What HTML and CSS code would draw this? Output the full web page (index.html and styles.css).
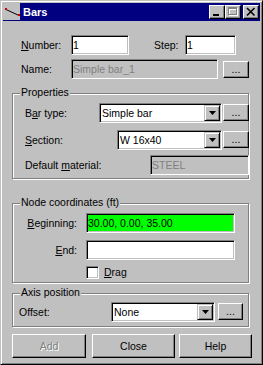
FILE: index.html
```html
<!DOCTYPE html>
<html lang="en">
<head>
    <meta charset="UTF-8">
    <title>Bars</title>
    <link rel="stylesheet" href="styles.css">
</head>
<body>
    <div class="window">
        <div class="titlebar">
            <svg class="app-icon" width="17" height="17" viewBox="0 0 17 17">
                <rect width="17" height="17" fill="#c0c0c0"/>
                <path d="M3 6.5 L16 12.5" stroke="#000" stroke-width="1"/>
                <rect x="2" y="5" width="2" height="2" fill="#d00000"/>
                <rect x="15" y="11" width="2" height="2" fill="#d00000"/>
            </svg>
            <span class="title">Bars</span>
            <div class="caption-buttons">
                <button class="caption-btn">
                    <svg width="14" height="12" viewBox="0 0 14 12">
                        <rect x="3" y="8" width="6" height="2" fill="#000"/>
                    </svg>
                </button>
                <button class="caption-btn">
                    <svg width="14" height="12" viewBox="0 0 14 12">
                        <rect x="3" y="2" width="9" height="2" fill="#fff"/>
                        <rect x="3" y="2" width="1" height="8" fill="#fff"/>
                        <rect x="11" y="2" width="1" height="8" fill="#fff"/>
                        <rect x="3" y="9" width="9" height="1" fill="#fff"/>
                        <rect x="2" y="1" width="9" height="2" fill="#808080"/>
                        <rect x="2" y="1" width="1" height="8" fill="#808080"/>
                        <rect x="10" y="1" width="1" height="8" fill="#808080"/>
                        <rect x="2" y="8" width="9" height="1" fill="#808080"/>
                    </svg>
                </button>
                <button class="caption-btn close">
                    <svg width="14" height="12" viewBox="0 0 14 12">
                        <path d="M3 2 L10.5 9.5 M10.5 2 L3 9.5" stroke="#000" stroke-width="1.6"/>
                    </svg>
                </button>
            </div>
        </div>

        <div class="client">
            <div class="row row-top row-number">
                <span class="label label-top"><u>N</u>umber:</span>
                <input class="field w-number" type="text" value="1">
                <span class="label label-step">Step:</span>
                <input class="field w-step" type="text" value="1">
            </div>
            <div class="row row-top row-name">
                <span class="label label-top">Name:</span>
                <input class="field w-name" type="text" value="Simple bar_1" disabled>
                <button class="push-btn more-btn more-name">...</button>
            </div>

            <div class="group group-props">
                <div class="group-title">Properties</div>
                <div class="row row-props row-bartype">
                    <span class="label label-bartype">B<u>a</u>r type:</span>
                    <div class="combo w-bartype">
                        <span class="combo-text">Simple bar</span>
                        <span class="combo-arrow"><svg width="7" height="4" viewBox="0 0 7 4"><path d="M0 0H7L3.5 4Z" fill="#000"/></svg></span>
                    </div>
                    <button class="push-btn more-btn">...</button>
                </div>
                <div class="row row-props row-section">
                    <span class="label label-section"><u>S</u>ection:</span>
                    <div class="combo w-section">
                        <span class="combo-text">W 16x40</span>
                        <span class="combo-arrow"><svg width="7" height="4" viewBox="0 0 7 4"><path d="M0 0H7L3.5 4Z" fill="#000"/></svg></span>
                    </div>
                    <button class="push-btn more-btn">...</button>
                </div>
                <div class="row row-props row-material">
                    <span class="label label-material">Default <u>m</u>aterial:</span>
                    <input class="field w-material" type="text" value="STEEL" disabled>
                </div>
            </div>

            <div class="group group-node">
                <div class="group-title">Node coordinates (ft)</div>
                <div class="row row-begin">
                    <span class="label label-node"><u>B</u>eginning:</span>
                    <input class="field field-green w-node" type="text" value="30.00, 0.00, 35.00">
                </div>
                <div class="row row-end">
                    <span class="label label-node"><u>E</u>nd:</span>
                    <input class="field w-node" type="text" value="">
                </div>
                <div class="row row-drag">
                    <span class="checkbox"></span>
                    <span class="label label-drag"><u>D</u>rag</span>
                </div>
            </div>

            <div class="group group-axis">
                <div class="group-title">Axis position</div>
                <div class="row row-offset">
                    <span class="label label-offset">Offset:</span>
                    <div class="combo w-offset">
                        <span class="combo-text">None</span>
                        <span class="combo-arrow"><svg width="7" height="4" viewBox="0 0 7 4"><path d="M0 0H7L3.5 4Z" fill="#000"/></svg></span>
                    </div>
                    <button class="push-btn more-btn more-offset">...</button>
                </div>
            </div>

            <div class="button-row">
                <button class="push-btn btn-add" disabled>Add</button>
                <button class="push-btn btn-close">Close</button>
                <button class="push-btn btn-help">Help</button>
            </div>
        </div>
    </div>
</body>
</html>
```

FILE: styles.css
```css
* {
    box-sizing: border-box;
}

body {
    margin: 0;
    font-family: "Liberation Sans", Arial, sans-serif;
    font-size: 10.5px;
    color: #000;
    background: #c0c0c0;
}

/* window frame */
.window {
    width: 263px;
    height: 365px;
    padding: 2px;
    background: #c0c0c0;
    border: 1px solid;
    border-color: #c0c0c0 #000 #000 #c0c0c0;
    box-shadow: inset 1px 1px 0 #fff, inset -1px -1px 0 #808080;
    overflow: hidden;
}

.titlebar {
    display: flex;
    align-items: flex-start;
    height: 18px;
    background: #000080;
}

.app-icon {
    display: block;
    flex-shrink: 0;
}

.title {
    color: #fff;
    font-weight: bold;
    font-size: 11px;
    line-height: 18px;
    margin-left: 3px;
}

.caption-buttons {
    display: flex;
    margin-left: auto;
    padding: 2px 1px 0 0;
}

.caption-btn {
    display: flex;
    width: 16px;
    height: 14px;
    padding: 0;
    border: 1px solid;
    border-color: #fff #000 #000 #fff;
    box-shadow: inset -1px -1px 0 #808080;
    background: #c0c0c0;
}

.caption-btn svg {
    display: block;
}

.caption-btn.close {
    margin-left: 2px;
}

/* rows */
.row {
    display: flex;
    align-items: flex-start;
    height: 20px;
}

.row > * {
    flex-shrink: 0;
}

.label {
    line-height: 20px;
    white-space: nowrap;
}

.row-top {
    padding-left: 18px;
}

.row-number {
    margin-top: 14px;
}

.row-name {
    margin-top: 4px;
}

.label-top {
    width: 50px;
}

.label-step {
    width: 31px;
    margin-left: 25px;
}

.w-number { width: 58px; }
.w-step { width: 51px; }
.w-name { width: 147px; }

/* sunken fields */
.field {
    height: 20px;
    margin: 0;
    padding: 0 1px;
    border: 1px solid;
    border-color: #808080 #fff #fff #808080;
    box-shadow: inset 1px 1px 0 #000, inset -1px -1px 0 #c0c0c0;
    background: #fff;
    font: inherit;
    color: #000;
    outline: none;
}

.field:disabled {
    background: #c0c0c0;
    color: #808080;
}

.field-green {
    background: #00ff00;
}

.combo {
    display: flex;
    height: 20px;
    border: 1px solid;
    border-color: #808080 #fff #fff #808080;
    box-shadow: inset 1px 1px 0 #000, inset -1px -1px 0 #c0c0c0;
    background: #fff;
}

.combo-text {
    flex: 1;
    padding-left: 2px;
    line-height: 18px;
}

.combo-arrow {
    display: flex;
    align-items: center;
    justify-content: center;
    width: 16px;
    height: 16px;
    margin: 1px 1px 0 0;
    border: 1px solid;
    border-color: #c0c0c0 #000 #000 #c0c0c0;
    box-shadow: inset 1px 1px 0 #fff, inset -1px -1px 0 #808080;
    background: #c0c0c0;
}

.combo-arrow svg {
    display: block;
}

/* raised buttons */
.push-btn {
    margin: 0;
    padding: 0;
    border: 1px solid;
    border-color: #fff #000 #000 #fff;
    box-shadow: inset -1px -1px 0 #808080;
    background: #c0c0c0;
    font: inherit;
    color: #000;
}

.push-btn:disabled {
    color: #808080;
    text-shadow: 1px 1px 0 #fff;
}

.more-btn {
    width: 26px;
    height: 17px;
    margin: 1px 0 0 1px;
    line-height: 13px;
}

.more-name {
    margin: 2px 0 0 5px;
}

.more-offset {
    width: 25px;
    margin-left: 3px;
}

/* group boxes */
.group {
    width: 237px;
    margin-left: 9px;
    border: 1px solid #808080;
    box-shadow: inset 1px 1px 0 #fff, 1px 1px 0 #fff;
}

.group-title {
    width: fit-content;
    margin: -8px 0 0 7px;
    padding: 0 1px;
    line-height: 13px;
    background: #c0c0c0;
}

.group-props {
    margin-top: 14px;
    padding-bottom: 3px;
}

.group-node {
    margin-top: 24px;
    padding-bottom: 3px;
}

.group-axis {
    margin-top: 10px;
    padding-bottom: 4px;
}

.row-props {
    padding-left: 12px;
}

.row-bartype { margin-top: 4px; }
.row-section { margin-top: 7px; }
.row-material { margin-top: 5px; }

.label-bartype { width: 74px; }
.label-section { width: 92px; }
.label-material { width: 125px; }

.w-bartype { width: 123px; }
.w-section { width: 105px; }
.w-material { width: 99px; }

.row-begin { margin-top: 4px; }
.row-end { margin-top: 7px; }

.label-node {
    width: 73px;
    padding-right: 9px;
    text-align: right;
}

.w-node { width: 149px; }

.row-drag {
    height: 13px;
    margin-top: 6px;
    padding-left: 73px;
}

.checkbox {
    width: 13px;
    height: 13px;
    border: 1px solid;
    border-color: #808080 #fff #fff #808080;
    box-shadow: inset 1px 1px 0 #000, inset -1px -1px 0 #c0c0c0;
    background: #fff;
}

.label-drag {
    margin-left: 5px;
    line-height: 13px;
}

.row-offset {
    margin-top: 3px;
    padding-left: 6px;
}

.label-offset { width: 92px; }
.w-offset { width: 104px; }

/* bottom buttons */
.button-row {
    display: flex;
    margin-top: 7px;
    padding-left: 9px;
}

.button-row .push-btn {
    height: 24px;
}

.btn-add { width: 74px; }
.btn-close { width: 83px; margin-left: 6px; }
.btn-help { width: 73px; margin-left: 4px; }
```
